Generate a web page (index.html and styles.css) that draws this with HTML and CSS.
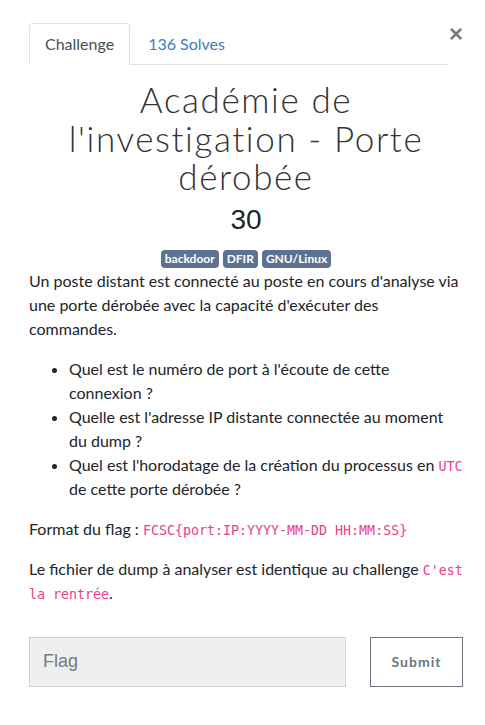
FILE: index.html
```html
<!DOCTYPE html>
<html lang="fr">
<head>
<meta charset="utf-8">
<title>Challenge</title>
<link rel="stylesheet" href="styles.css">
</head>
<body>
<div class="modal">
  <div class="header">
    <ul class="tabs">
      <li class="tab active">Challenge</li>
      <li class="tab link">136 Solves</li>
    </ul>
    <button class="close" aria-label="Close">×</button>
  </div>
  <h2 class="title">Académie de l'investigation - Porte dérobée</h2>
  <h3 class="value">30</h3>
  <div class="tags">
    <span class="badge">backdoor</span>
    <span class="badge">DFIR</span>
    <span class="badge">GNU/Linux</span>
  </div>
  <div class="desc">
    <p>Un poste distant est connecté au poste en cours d'analyse via une porte dérobée avec la capacité d'exécuter des commandes.</p>
    <ul>
      <li>Quel est le numéro de port à l'écoute de cette connexion ?</li>
      <li>Quelle est l'adresse IP distante connectée au moment du dump ?</li>
      <li>Quel est l'horodatage de la création du processus en <code>UTC</code> de cette porte dérobée ?</li>
    </ul>
    <p>Format du flag : <code>FCSC{port:IP:YYYY-MM-DD HH:MM:SS}</code></p>
    <p>Le fichier de dump à analyser est identique au challenge <code>C'est la rentrée</code>.</p>
  </div>
  <form class="submit-row">
    <input class="flag" type="text" placeholder="Flag">
    <button class="submit" type="button">Submit</button>
  </form>
</div>
</body>
</html>
```
FILE: styles.css
```css
* { box-sizing: border-box; }
html, body { margin: 0; background: #fff; }
body {
  font-family: "Lato", "Liberation Sans", sans-serif;
  font-size: 16px;
  line-height: 24px;
  color: #212529;
}
.modal {
  padding: 23px 22px 0 29px;
}
.header {
  display: flex;
  align-items: flex-start;
}
.tabs {
  list-style: none;
  margin: 0;
  padding: 0;
  display: flex;
  width: 420px;
  border-bottom: 1px solid #dee2e6;
}
.tab {
  padding: 8px 15px;
  border: 1px solid transparent;
  border-radius: 4px 4px 0 0;
  margin-bottom: -1px;
  margin-right: 2px;
}
.tab.active {
  color: #495057;
  border-color: #dee2e6 #dee2e6 #fff;
  background: #fff;
}
.tab.link {
  color: #3a7dbf;
}
.close {
  margin-left: auto;
  background: none;
  border: 0;
  padding: 0;
  font-family: "Liberation Sans", sans-serif;
  font-size: 24px;
  font-weight: bold;
  line-height: 20px;
  color: #7a7a7a;
  width: 14px;
  margin-top: 1px;
}
.title {
  margin: 15px 0 0;
  text-align: center;
  font-family: "Lato", sans-serif;
  font-weight: 300;
  font-size: 35px;
  line-height: 38.5px;
  letter-spacing: 1.6px;
  color: #333;
}
.value {
  margin: 7px 0 0;
  text-align: center;
  font-family: "Liberation Sans", sans-serif;
  font-weight: 400;
  font-size: 28px;
  line-height: 33px;
  color: #212529;
}
.tags {
  display: flex;
  justify-content: center;
  gap: 4px;
  margin-top: 14px;
}
.badge {
  display: inline-block;
  background: #5b7391;
  color: #fff;
  font-size: 12px;
  font-weight: 700;
  line-height: 12px;
  padding: 3px 4px 3px;
  border-radius: 4px;
}
.desc { margin-top: 1px; }
.desc p { margin: 0 0 16px; }
.desc ul { margin: 0 0 16px; padding-left: 40px; }
code {
  font-family: "DejaVu Sans Mono", monospace;
  font-size: 13.3px;
  line-height: 1;
  color: #e83e8c;
}
.submit-row {
  display: flex;
  gap: 24px;
  margin-top: 32px;
  width: 434px;
}
.flag {
  width: 317px;
  height: 50px;
  background: #efefef;
  border: 1px solid #cfd2d6;
  padding: 0 13px;
  font-family: "Liberation Sans", sans-serif;
  font-size: 18px;
  color: #495057;
}
.flag::placeholder { color: #737b83; }
.submit {
  width: 93px;
  height: 50px;
  background: #fff;
  border: 1px solid #6c757d;
  font-family: "Lato", sans-serif;
  font-size: 14px;
  font-weight: 700;
  letter-spacing: 1px;
  color: #6c757d;
}
```
